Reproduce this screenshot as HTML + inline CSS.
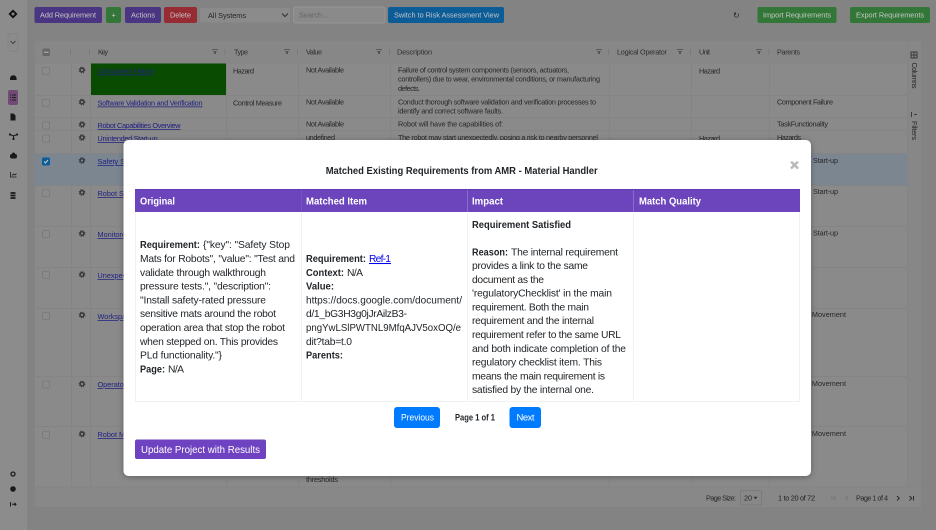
<!DOCTYPE html>
<html lang="en"><head><meta charset="utf-8"><title>Matched Existing Requirements</title>
<style>
html,body{margin:0;padding:0;width:936px;height:530px;overflow:hidden;background:#848485}
svg{display:block;font-family:"Liberation Sans",Arial,sans-serif}
.bg text{font-size:7.300px;fill:#2b2b2b}
.bg .lk{fill:#24248c;text-decoration:underline}
.bg .h{fill:#333}
.bg .b{fill:#d9d9d9;font-size:7.300px}
.m text{font-size:10.300px;fill:#212529}
.m .s{font-weight:bold;font-size:10px}
.m .w{fill:#fff}
.ln{stroke:#909091;stroke-width:1}
</style></head><body>
<svg width="936" height="530" viewBox="0 0 936 530" xmlns="http://www.w3.org/2000/svg">
<defs>
<filter id="sh" x="-5%" y="-5%" width="110%" height="110%" color-interpolation-filters="sRGB"><feDropShadow dx="0" dy="1" stdDeviation="3" flood-color="#000" flood-opacity=".3"/></filter>
<filter id="soft" x="0" y="0" width="100%" height="100%" color-interpolation-filters="sRGB"><feGaussianBlur stdDeviation="0.3"/></filter>
<filter id="soft2" x="0" y="0" width="100%" height="100%" color-interpolation-filters="sRGB"><feGaussianBlur stdDeviation="0.2"/></filter>
<g id="gear"><circle r="1.800" fill="none" stroke="#3d3d42" stroke-width="1.300"/><circle r="2.800" fill="none" stroke="#3d3d42" stroke-width="1" stroke-dasharray="1.200 1"/></g>
</defs>
<g class="bg" filter="url(#soft)">
<rect width="936" height="530" fill="#8f8f90"/>
<rect width="27" height="530" fill="#989899"/>
<rect x="35" y="41" width="886" height="466" rx="3" fill="#969697"/>
<rect x="35" y="41" width="886" height="22" fill="#939394"/>
<rect x="35" y="153" width="872" height="32" fill="#87929e"/>
<rect x="90" y="63" width="136" height="32" fill="#0a5200"/>
<rect x="35" y="487" width="886" height="20" fill="#949495"/>
<rect x="907" y="41" width="14" height="446" fill="#939394"/>
<g class="ln">
<path d="M35 63H907M35 95.500H907M35 117.500H907M35 130.500H907M35 153.500H907M35 185.500H907M35 226.500H907M35 267.500H907M35 308.500H907M35 376.500H907M35 426.500H907M35 487H921"/>
<path d="M71.500 63V487M90.500 63V487M226.500 63V487M298.500 63V487M390.500 63V487M609.500 63V487M691.500 63V487M769.500 63V487M907.500 41V487"/>
</g>
<!-- toolbar -->
<rect x="34.500" y="7" width="67.500" height="16" rx="2" fill="#513a8e"/>
<rect x="106" y="7" width="15" height="16" rx="2" fill="#37823c"/>
<rect x="125" y="7" width="36" height="16" rx="2" fill="#513a8e"/>
<rect x="164" y="7" width="33" height="16" rx="2" fill="#a42f38"/>
<rect x="200" y="8" width="90" height="14.500" rx="2" fill="#979798"/>
<rect x="293.500" y="7" width="91.500" height="16" rx="2" fill="#969697" stroke="#a2a2a2"/>
<rect x="388" y="7" width="116" height="16" rx="2" fill="#0c64a4"/>
<rect x="757.500" y="7" width="79" height="16" rx="2" fill="#37823c"/>
<rect x="850" y="7" width="80" height="16" rx="2" fill="#37823c"/>
<text class="b" x="40" y="17.500" textLength="56">Add Requirement</text>
<text class="b" x="111.500" y="17.500">+</text>
<text class="b" x="131" y="17.500" textLength="24">Actions</text>
<text class="b" x="170" y="17.500" textLength="21">Delete</text>
<text x="208" y="17.800" textLength="38">All Systems</text>
<path d="M282 13.500l3 3 3-3" fill="none" stroke="#333" stroke-width="1"/>
<text x="299" y="17.500" textLength="29" style="fill:#6e6e6e">Search...</text>
<text class="b" x="394" y="17.500" textLength="105">Switch to Risk Assessment View</text>
<text x="733" y="18" style="font-size:8px">↻</text>
<text class="b" x="763" y="17.500" textLength="68">Import Requirements</text>
<text class="b" x="856" y="17.500" textLength="68">Export Requirements</text>
<!-- header -->
<rect x="42.500" y="48.500" width="7.500" height="7.500" rx="1.500" fill="#707071"/><path d="M44 52.200h4.500" stroke="#ccc"/>
<path d="M70.500 48.500v6M89.500 48.500v6M225 48.500v6M297.500 48.500v6M389.500 48.500v6M608.500 48.500v6M690.500 48.500v6M769 48.500v6" stroke="#808081" stroke-width=".7"/>
<text class="h" x="98" y="54.500" textLength="10">Key</text>
<text class="h" x="234" y="54.500" textLength="14">Type</text>
<text class="h" x="306" y="54.500" textLength="16">Value</text>
<text class="h" x="397" y="54.500" textLength="35">Description</text>
<text class="h" x="617" y="54.500" textLength="50">Logical Operator</text>
<text class="h" x="699" y="54.500" textLength="11">Unit</text>
<text class="h" x="777" y="54.500" textLength="23">Parents</text>
<g fill="#5d5d5e"><path d="M212 49h6v.9h-6zM213 51h4l-1 1.500v1.500h-2v-1.500z"/><path d="M284 49h6v.9h-6zM285 51h4l-1 1.500v1.500h-2v-1.500zM376 49h6v.9h-6zM377 51h4l-1 1.500v1.500h-2v-1.500zM596 49h6v.9h-6zM597 51h4l-1 1.500v1.500h-2v-1.500zM677 49h6v.9h-6zM678 51h4l-1 1.500v1.500h-2v-1.500zM756 49h6v.9h-6zM757 51h4l-1 1.500v1.500h-2v-1.500z"/></g>
<!-- checkboxes -->
<g fill="#979798" stroke="#828283" stroke-width=".8">
<rect x="42.500" y="67.500" width="7" height="7" rx="1.500"/><rect x="42.500" y="99.500" width="7" height="7" rx="1.500"/><rect x="42.500" y="122" width="7" height="7" rx="1.500"/><rect x="42.500" y="135" width="7" height="7" rx="1.500"/><rect x="42.500" y="189.500" width="7" height="7" rx="1.500"/><rect x="42.500" y="230.500" width="7" height="7" rx="1.500"/><rect x="42.500" y="271.500" width="7" height="7" rx="1.500"/><rect x="42.500" y="312.500" width="7" height="7" rx="1.500"/><rect x="42.500" y="381" width="7" height="7" rx="1.500"/><rect x="42.500" y="431.500" width="7" height="7" rx="1.500"/></g>
<rect x="42" y="157.500" width="8" height="8" rx="1.500" fill="#0c64a4"/><path d="M44 161.500l1.500 1.500 2.500-3" fill="none" stroke="#ddd"/>
<!-- gears -->
<use href="#gear" x="82" y="70"/><use href="#gear" x="82" y="102"/><use href="#gear" x="82" y="124.500"/><use href="#gear" x="82" y="137.500"/><use href="#gear" x="82" y="160.500"/><use href="#gear" x="82" y="192.500"/><use href="#gear" x="82" y="233.500"/><use href="#gear" x="82" y="274.500"/><use href="#gear" x="82" y="315"/><use href="#gear" x="82" y="384"/><use href="#gear" x="82" y="434"/>
<!-- rows -->
<text class="lk" x="97.500" y="73.500" textLength="56">Component Failure</text>
<text x="233" y="73.500" textLength="21">Hazard</text>
<text x="306" y="72.500" textLength="38">Not Available</text>
<text x="398" y="72.500" textLength="171">Failure of control system components (sensors, actuators,</text>
<text x="398" y="81.500" textLength="202">controllers) due to wear, environmental conditions, or manufacturing</text>
<text x="398" y="91" textLength="22">defects.</text>
<text x="699" y="73.500" textLength="21">Hazard</text>
<text class="lk" x="97.500" y="105.500" textLength="105">Software Validation and Verification</text>
<text x="233" y="105.500" textLength="49">Control Measure</text>
<text x="306" y="104.500" textLength="38">Not Available</text>
<text x="398" y="104.500" textLength="198">Conduct thorough software validation and verification processes to</text>
<text x="398" y="113.500" textLength="105">identify and correct software faults.</text>
<text x="777" y="104.500" textLength="56">Component Failure</text>
<text class="lk" x="97.500" y="128" textLength="83">Robot Capabilities Overview</text>
<text x="306" y="126.500" textLength="38">Not Available</text>
<text x="398" y="126.500" textLength="105">Robot will have the capabilities of:</text>
<text x="777" y="126.500" textLength="51">TaskFunctionality</text>
<text class="lk" x="97.500" y="141" textLength="60">Unintended Start-up</text>
<text x="306" y="140" textLength="29">undefined</text>
<text x="398" y="140" textLength="200">The robot may start unexpectedly, posing a risk to nearby personnel</text>
<text x="699" y="141" textLength="21">Hazard</text>
<text x="777" y="140" textLength="24">Hazards</text>
<text class="lk" x="97.500" y="164">Safety Stop Mats for Robots</text>
<text class="lk" x="97.500" y="196">Robot Safety Controls</text>
<text class="lk" x="97.500" y="237">Monitored Standstill</text>
<text class="lk" x="97.500" y="278">Unexpected Motion</text>
<text class="lk" x="97.500" y="319">Workspace Limits</text>
<text class="lk" x="97.500" y="387">Operator Training</text>
<text class="lk" x="97.500" y="437">Robot Maintenance</text>
<text x="813" y="163" textLength="25">Start-up</text>
<text x="813" y="194" textLength="25">Start-up</text>
<text x="813" y="235.500" textLength="25">Start-up</text>
<text x="846" y="317" text-anchor="end">Robot Movement</text>
<text x="846" y="386" text-anchor="end">Robot Movement</text>
<text x="846" y="436" text-anchor="end">Robot Movement</text>
<text x="306" y="482" textLength="32">thresholds</text>
<!-- side panel -->
<rect x="911" y="52" width="6" height="6" fill="none" stroke="#2b2b2b" stroke-width=".8"/><path d="M914 52v6M911 55h6" stroke="#2b2b2b" stroke-width=".7"/>
<text transform="translate(912,62.500) rotate(90)" textLength="26">Columns</text>
<path d="M911.500 112v5M914 114.500h3" fill="none" stroke="#2b2b2b" stroke-width=".8"/>
<text transform="translate(912,121) rotate(90)" textLength="19">Filters</text>
<!-- pagination -->
<text x="706" y="500.500" textLength="30">Page Size:</text>
<rect x="740.500" y="490.500" width="21" height="14.500" rx="1.500" fill="none" stroke="#868687"/>
<text x="744" y="500.500" textLength="8">20</text><path d="M753.500 496.800h4l-2 2.500z" fill="#333"/>
<text x="778" y="500.500" textLength="37" style="fill:#222">1 to 20 of 72</text>
<path d="M832 496v4.500M836 496l-2.200 2.200 2.200 2.200M848 496l-2.200 2.200 2.200 2.200" fill="none" stroke="#7c7c7d" stroke-width=".8"/>
<text x="856" y="500.500" textLength="32">Page 1 of 4</text>
<path d="M897 496l2.200 2.200-2.200 2.200M909.500 496l2.200 2.200-2.200 2.200M913.500 496v4.500" fill="none" stroke="#222" stroke-width=".9"/>
<!-- sidebar icons -->
<path d="M13 9.500l4.500 4.500-4.500 4.500-4.500-4.500z" fill="#111"/><circle cx="13" cy="14" r="1.500" fill="#989899"/>
<rect x="8" y="33.500" width="10" height="18" rx="3" fill="#979798" stroke="#8e8e8f" stroke-width=".7"/>
<path d="M10.500 41l2.500 2.500 2.500-2.500" fill="none" stroke="#333" stroke-width=".8"/>
<rect x="8" y="90" width="10" height="15" rx="2" fill="#7b527f"/>
<path d="M10 95h1M12 95h4M10 97.500h1M12 97.500h4M10 100h1M12 100h4" stroke="#222" stroke-width="1.100"/>
<path d="M10 78.500a3.300 3.300 0 0 1 6.600 0l0 1.500h-6.600z" fill="#1c1c1c"/>
<path d="M10.500 113.500h3l2 2v5h-5z" fill="#1c1c1c"/>
<path d="M10 134.500l3.500 1.500 3.500-1.500M13.500 136l0 3" stroke="#1c1c1c" fill="none"/><circle cx="10" cy="134.500" r="1.100" fill="#1c1c1c"/><circle cx="17" cy="134.500" r="1.100" fill="#1c1c1c"/><circle cx="13.500" cy="139" r="1.100" fill="#1c1c1c"/>
<rect x="10" y="154" width="7" height="4.500" rx="2" fill="#1c1c1c"/><circle cx="13.500" cy="154" r="1.500" fill="#1c1c1c"/>
<path d="M10.500 172v5h6M12 175.500l1.500-1.500 1.500 1 1.500-1.500" fill="none" stroke="#1c1c1c" stroke-width=".8"/>
<path d="M10.500 193h5M10.500 195.500h5M10.500 198h5" stroke="#1c1c1c" stroke-width="1.800"/>
<circle cx="13" cy="474" r="2" fill="none" stroke="#1c1c1c" stroke-width="1.300"/>
<circle cx="13" cy="489" r="2.800" fill="#1c1c1c"/>
<path d="M10.500 502v4.500M12 504.300h4M14.500 502.800l1.500 1.500-1.500 1.500" fill="none" stroke="#1c1c1c" stroke-width="1"/>
<rect width="936" height="530" fill="#000" opacity=".08"/>
</g>
<!-- modal -->
<rect x="123.500" y="140" width="687.500" height="336" rx="5" fill="#fff" filter="url(#sh)"/>
<g class="m" filter="url(#soft2)">
<text class="s" x="325.700" y="174" textLength="272" lengthAdjust="spacingAndGlyphs">Matched Existing Requirements from AMR - Material Handler</text>
<path d="M791 161.500l7 7M798 161.500l-7 7" stroke="#b9b9b9" stroke-width="2.400"/>
<rect x="135" y="189" width="665" height="23" fill="#6c45bd"/>
<path d="M135 189.500h665" stroke="#5f3bb0"/>
<path d="M301.500 190v22" stroke="#7653c4"/>
<path d="M467.500 190v22M633.500 190v22" stroke="#8a6ccb"/>
<path d="M135.500 212v189.500H799.500V212M301.500 212v189M467.500 212v189M633.500 212v189" fill="none" stroke="#f1f1f1"/>
<text class="s w" x="140" y="204.500" textLength="35" lengthAdjust="spacingAndGlyphs">Original</text>
<text class="s w" x="306" y="204.500" textLength="61" lengthAdjust="spacingAndGlyphs">Matched Item</text>
<text class="s w" x="472" y="204.500" textLength="31" lengthAdjust="spacingAndGlyphs">Impact</text>
<text class="s w" x="639" y="204.500" textLength="62" lengthAdjust="spacingAndGlyphs">Match Quality</text>

<text class="s" x="140" y="248" textLength="60" lengthAdjust="spacingAndGlyphs">Requirement:</text>
<text x="203" y="248" textLength="87">{"key": "Safety Stop</text>
<text x="140" y="262" textLength="155">Mats for Robots", "value": "Test and</text>
<text x="140" y="276" textLength="126">validate through walkthrough</text>
<text x="140" y="289.500" textLength="131">pressure tests.", "description":</text>
<text x="140" y="303.500" textLength="126">"Install safety-rated pressure</text>
<text x="140" y="317" textLength="136">sensitive mats around the robot</text>
<text x="140" y="331" textLength="145">operation area that stop the robot</text>
<text x="140" y="345" textLength="138">when stepped on. This provides</text>
<text x="140" y="358.500" textLength="82">PLd functionality."}</text>
<text class="s" x="140" y="372.500" textLength="25" lengthAdjust="spacingAndGlyphs">Page:</text>
<text x="168" y="372.500" textLength="16">N/A</text>

<text class="s" x="306" y="262" textLength="60" lengthAdjust="spacingAndGlyphs">Requirement:</text>
<text x="369" y="262" textLength="22" style="fill:#0000ee;text-decoration:underline">Ref-1</text>
<text class="s" x="306" y="276" textLength="38" lengthAdjust="spacingAndGlyphs">Context:</text>
<text x="347" y="276" textLength="16">N/A</text>
<text class="s" x="306" y="289.500" textLength="28" lengthAdjust="spacingAndGlyphs">Value:</text>
<text x="306" y="303.500" textLength="156" lengthAdjust="spacingAndGlyphs">https://docs.google.com/document/</text>
<text x="306" y="317" textLength="101">d/1_bG3H3g0jJrAilzB3-</text>
<text x="306" y="331" textLength="155" lengthAdjust="spacingAndGlyphs">pngYwLSlPWTNL9MfqAJV5oxOQ/e</text>
<text x="306" y="345" textLength="46">dit?tab=t.0</text>
<text class="s" x="306" y="358.500" textLength="37" lengthAdjust="spacingAndGlyphs">Parents:</text>

<text class="s" x="472" y="228" textLength="99" lengthAdjust="spacingAndGlyphs">Requirement Satisfied</text>
<text class="s" x="472" y="255.500" textLength="36" lengthAdjust="spacingAndGlyphs">Reason:</text>
<text x="511" y="255.500" textLength="107">The internal requirement</text>
<text x="472" y="269" textLength="116">provides a link to the same</text>
<text x="472" y="283" textLength="72">document as the</text>
<text x="472" y="296.500" textLength="140">'regulatoryChecklist' in the main</text>
<text x="472" y="310.500" textLength="117">requirement. Both the main</text>
<text x="472" y="324" textLength="122">requirement and the internal</text>
<text x="472" y="338" textLength="149">requirement refer to the same URL</text>
<text x="472" y="352" textLength="154">and both indicate completion of the</text>
<text x="472" y="365.500" textLength="130">regulatory checklist item. This</text>
<text x="472" y="379.500" textLength="133">means the main requirement is</text>
<text x="472" y="393" textLength="122">satisfied by the internal one.</text>

<rect x="394" y="407" width="46" height="21" rx="3" fill="#007bff"/>
<rect x="509.500" y="407" width="31.500" height="21" rx="3" fill="#007bff"/>
<text class="w" x="401" y="420.500" textLength="33" lengthAdjust="spacingAndGlyphs" style="font-size:9.500px">Previous</text>
<text class="s" x="455" y="420.500" textLength="40" lengthAdjust="spacingAndGlyphs" style="font-size:9.500px">Page 1 of 1</text>
<text class="w" x="516.500" y="420.500" textLength="18" style="font-size:9.500px">Next</text>
<rect x="135" y="439.500" width="131" height="19.500" rx="2" fill="#6f42c1"/>
<text class="w" x="141" y="453" textLength="119" lengthAdjust="spacingAndGlyphs">Update Project with Results</text>
</g>
</svg>
</body></html>
